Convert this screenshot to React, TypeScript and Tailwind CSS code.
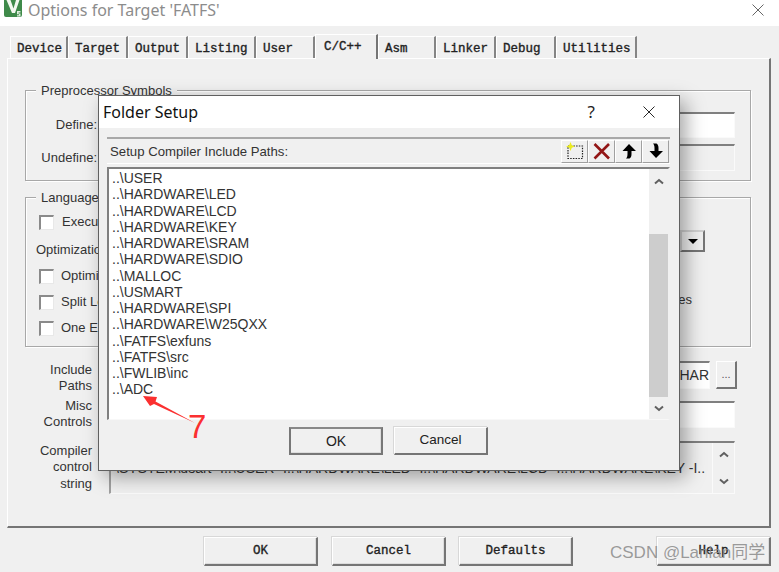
const sans = "font-['Liberation_Sans',sans-serif]";
const mono = "font-['Liberation_Mono',monospace] [-webkit-text-stroke:0.35px_#222]";

const tabs = [
  { name: "Device", w: "w-[58px]" },
  { name: "Target", w: "w-[60px]" },
  { name: "Output", w: "w-[60px]" },
  { name: "Listing", w: "w-[68px]" },
  { name: "User", w: "w-[59px]" },
  { name: "C/C++", w: "w-[63px]", active: true },
  { name: "Asm", w: "w-[58px]" },
  { name: "Linker", w: "w-[60px]" },
  { name: "Debug", w: "w-[60px]" },
  { name: "Utilities", w: "w-[81px]" },
];

const paths = [
  "..\\USER",
  "..\\HARDWARE\\LED",
  "..\\HARDWARE\\LCD",
  "..\\HARDWARE\\KEY",
  "..\\HARDWARE\\SRAM",
  "..\\HARDWARE\\SDIO",
  "..\\MALLOC",
  "..\\USMART",
  "..\\HARDWARE\\SPI",
  "..\\HARDWARE\\W25QXX",
  "..\\FATFS\\exfuns",
  "..\\FATFS\\src",
  "..\\FWLIB\\inc",
  "..\\ADC",
];

const Logo = () => (
  <svg width="19" height="18" viewBox="0 0 19 18">
    <rect x="0" y="-2" width="18" height="19" rx="2" fill="#3f8a4a" />
    <path d="M2.5 0 L8 13 L11 13 L15.5 0 L12 0 L9.5 8.5 L6.5 0 Z" fill="#f4f8f0" />
    <path d="M13 11 h3.5 v1.5 h-2 v1 h2 v3 h-3.5 v-1.2 h2 v-1 h-2 Z" fill="#dfeedd" />
  </svg>
);

const CloseIcon = ({ size, color }: { size: number; color: string }) => (
  <svg width={size} height={size} viewBox="0 0 12 12">
    <path d="M0.5 0.5 L11.5 11.5 M11.5 0.5 L0.5 11.5" stroke={color} strokeWidth="0.9" fill="none" />
  </svg>
);

const Chevron = ({ down }: { down?: boolean }) => (
  <svg width="10" height="7" viewBox="0 0 10 7">
    <path d={down ? "M1 1.5 L5 5 L9 1.5" : "M1 5.5 L5 2 L9 5.5"} stroke="#606060" strokeWidth="2" fill="none" />
  </svg>
);

const Checkbox = () => (
  <span className="w-[15px] h-[15px] shrink-0 bg-white border-t-2 border-l-2 border-[#8a8a8a] border-r border-b border-r-[#e8e8e8] border-b-[#e8e8e8]" />
);

const Group = ({ title, className, children }: { title: string; className: string; children: React.ReactNode }) => (
  <div className={`relative border border-[#a8a8a8] shadow-[1px_1px_0_#fff,inset_1px_1px_0_#fff] ${className}`}>
    <span className="absolute left-[10px] top-[-9px] bg-[#f0f0f0] px-[5px] leading-[17px] text-[#333] whitespace-nowrap">
      {title}
    </span>
    {children}
  </div>
);

const sunken = "border-t-2 border-l-2 border-t-[#808080] border-l-[#a0a0a0] border-r border-b border-r-[#fafafa] border-b-[#fafafa]";

const Raised = ({ label, className }: { label: string; className: string }) => (
  <button className={`h-[29px] bg-[#f0f0f0] border-t border-l border-t-[#fff] border-l-[#fff] border-r-2 border-b-2 border-r-[#757575] border-b-[#757575] shadow-[inset_-1px_-1px_0_#dcdcdc,-1px_-1px_0_#d8d8d8] ${mono} text-[12.5px] text-[#222] ${className}`}>
    {label}
  </button>
);

const ToolBtn = ({ children }: { children: React.ReactNode }) => (
  <div className="w-[27px] h-[23px] flex items-center justify-center border-t border-l border-white border-r border-b border-r-[#a0a0a0] border-b-[#a0a0a0]">
    {children}
  </div>
);

export default function App() {
  return (
    <div className={`relative w-[779px] h-[572px] overflow-hidden bg-[#f0f0f0] ${sans} text-[13px] text-[#333]`}>
      <div className="h-[26px] bg-white flex items-start pl-[4px]">
        <Logo />
        <span className="ml-[5px] mt-[-1px] text-[16px] leading-[22px] text-[#8c8c8c] font-['Noto_Sans',sans-serif]">
          Options for Target 'FATFS'
        </span>
        <div className="ml-auto mr-[15px] mt-[4px]">
          <CloseIcon size={12} color="#555" />
        </div>
      </div>

      <div className="flex items-end h-[32px] pl-[10px]">
        {tabs.map((t) =>
          t.active ? (
            <div
              key={t.name}
              className={`${t.w} h-[25px] mb-[-1px] z-10 pl-[8px] pt-[3px] bg-[#f0f0f0] border-t border-l border-white border-r-2 border-r-[#757575] ${mono} text-[12.5px] text-[#222]`}
            >
              {t.name}
            </div>
          ) : (
            <div
              key={t.name}
              className={`${t.w} h-[22px] pl-[6px] pt-[3px] border-t border-l border-white border-r-2 border-r-[#858585] ${mono} text-[12.5px] text-[#222]`}
            >
              {t.name}
            </div>
          )
        )}
      </div>

      <div className="mx-[7px] w-[764px] h-[470px] pt-[31px] pl-[17px] pr-[18px] border-t border-l border-white border-r-2 border-b-2 border-r-[#757575] border-b-[#757575]">
        <Group title="Preprocessor Symbols" className="h-[91px] pt-[21px] pr-[15px]">
          <div className="flex items-center h-[26px]">
            <span className="w-[71px] shrink-0 text-right">Define:</span>
            <div className={`flex-1 ml-[5px] h-full bg-white ${sunken}`} />
          </div>
          <div className="flex items-center h-[27px] mt-[6px]">
            <span className="w-[71px] shrink-0 text-right">Undefine:</span>
            <div className={`flex-1 ml-[5px] h-full ${sunken}`} />
          </div>
        </Group>

        <Group title="Language / Code Generation" className="h-[150px] mt-[16px] pt-[16px] pl-[13px] pr-[45px] mb-[14px]">
          <div className="flex items-center gap-[8px] h-[16px]">
            <Checkbox />
            <span>Execute-only Code</span>
          </div>
          <div className="flex items-start justify-between h-[28px] ml-[-3px]">
            <span className="self-end leading-[17px]">Optimization: Level 0 (-O0)</span>
            <div className="w-[25px] h-[22px] flex items-center justify-center border-2 border-t-[#d0d0d0] border-l-[#d0d0d0] border-r-[#757575] border-b-[#757575]">
              <span className="w-0 h-0 border-x-[5px] border-x-transparent border-t-[5px] border-t-black" />
            </div>
          </div>
          <div className="flex items-center gap-[7px] h-[16px] mt-[10px]">
            <Checkbox />
            <span>Optimize for Time</span>
          </div>
          <div className="flex items-center gap-[7px] h-[16px] mt-[10px]">
            <Checkbox />
            <span>Split Load and Store Multiple</span>
            <span className="ml-auto mr-[13px] mt-[-4px]">No Auto Includes</span>
          </div>
          <div className="flex items-center gap-[7px] h-[16px] mt-[10px]">
            <Checkbox />
            <span>One ELF Section per Function</span>
          </div>
        </Group>

        <div className="flex items-center h-[28px]">
          <span className="w-[67px] shrink-0 text-right leading-[16px] pt-[6px]">Include<br />Paths</span>
          <div className={`w-[601px] ml-[17px] h-full bg-white ${sunken} flex items-center justify-end overflow-hidden whitespace-nowrap text-[14px]`}>
            ..\HARDWARE\KEY;..\HARDWARE\SRAM;..\HARDWARE\SDIO;..\MALLOC;..\USMART;..\HARDWARE\SPI;..\CHAR
          </div>
          <button className="w-[21px] h-full ml-[6px] bg-[#f0f0f0] border-t border-l border-white border-r-2 border-b-2 border-r-[#757575] border-b-[#757575] text-[11px] text-[#555]">
            ...
          </button>
        </div>

        <div className="flex items-center h-[27px] mt-[12px] pr-[16px]">
          <span className="w-[67px] shrink-0 text-right leading-[16px] pb-[2px]">Misc<br />Controls</span>
          <div className={`flex-1 ml-[16px] h-full bg-white ${sunken}`} />
        </div>

        <div className="flex items-center h-[53px] mt-[13px] pr-[16px]">
          <span className="w-[67px] shrink-0 text-right leading-[16.5px]">Compiler<br />control<br />string</span>
          <div className={`flex-1 min-w-0 ml-[17px] h-full flex ${sunken}`}>
            <div className="flex-1 min-w-0 overflow-hidden whitespace-nowrap flex items-center pl-[4px] text-[14px]">
              \SYSTEM\usart -I..\USER -I..\HARDWARE\LED -I..\HARDWARE\LCD -I..\HARDWARE\KEY -I..
            </div>
            <div className="w-[22px] shrink-0 flex flex-col items-center justify-between py-[8px] border-l border-[#fafafa]">
              <Chevron />
              <Chevron down />
            </div>
          </div>
        </div>
      </div>

      <div className="flex mt-[9px] ml-[204px]">
        <Raised label="OK" className="w-[114px]" />
        <Raised label="Cancel" className="w-[114px] ml-[14px]" />
        <Raised label="Defaults" className="w-[114px] ml-[13px]" />
        <Raised label="Help" className="w-[114px] ml-[84px]" />
      </div>

      {/* dialog on top of the options window */}
      <div className="absolute left-[98px] top-[95px] w-[582px] h-[376px] bg-[#f0f0f0] border border-[#606060] shadow-[6px_6px_18px_rgba(0,0,0,0.35)] flex flex-col">
        <div className="h-[32px] bg-white shrink-0 flex items-center pl-[4px]">
          <span className="font-['Noto_Sans',sans-serif] text-[16px] text-[#111]">Folder Setup</span>
          <span className="ml-auto mr-[48px] text-[17px] text-[#222] font-['Noto_Sans',sans-serif]">?</span>
          <div className="mr-[24px]">
            <CloseIcon size={12} color="#111" />
          </div>
        </div>

        <div className="mt-[9px] ml-[8px] mr-[9px] h-[27px] flex items-center border-t-2 border-[#a8a8a8] border-b border-b-white pl-[3px] pr-[1px]">
          <span className="pt-[2px] text-[13.2px]">Setup Compiler Include Paths:</span>
          <div className="ml-auto flex">
            <ToolBtn>
              <svg width="20" height="18" viewBox="0 0 20 18">
                <rect x="3" y="4" width="14.5" height="12.5" fill="none" stroke="#222" strokeWidth="1.2" strokeDasharray="1.5 1.2" />
                <path d="M5.5 0 L6.8 3.2 L10 4.5 L6.8 5.8 L5.5 9 L4.2 5.8 L1 4.5 L4.2 3.2 Z" fill="#ecec20" />
              </svg>
            </ToolBtn>
            <ToolBtn>
              <svg width="18" height="17" viewBox="0 0 18 17">
                <path d="M1.5 1 L16 15.5 M16 1 L1.5 15.5" stroke="#931616" strokeWidth="2.6" fill="none" />
              </svg>
            </ToolBtn>
            <ToolBtn>
              <svg width="16" height="16" viewBox="0 0 16 16">
                <path d="M8 1 L15 8 L10.5 8 L10.5 11 C10.5 13 10 14.5 8.5 15.5 L5 15.5 C6 14.5 6.5 13 6.5 11 L6.5 8 L1.5 8 Z" fill="#000" />
              </svg>
            </ToolBtn>
            <ToolBtn>
              <svg width="16" height="16" viewBox="0 0 16 16">
                <path d="M8 15 L15 8 L10.5 8 L10.5 5 C10.5 3 10 1.5 8.5 0.5 L5 0.5 C6 1.5 6.5 3 6.5 5 L6.5 8 L1.5 8 Z" fill="#000" />
              </svg>
            </ToolBtn>
          </div>
        </div>

        <div className="mt-[3px] ml-[8px] mr-[9px] h-[253px] flex bg-white border-t-2 border-l-2 border-t-[#808080] border-l-[#808080] border-r-2 border-b border-r-[#f0f0f0] border-b-[#f8f8f8]">
          <div className="flex-1 pl-[3px] pt-[1px] text-[14px]">
            {paths.map((p) => (
              <div key={p} className="h-[16.25px] leading-[16px] whitespace-nowrap">
                {p}
              </div>
            ))}
          </div>
          <div className="w-[19px] bg-[#f0f0f0] flex flex-col items-center">
            <div className="h-[24px] flex items-end pb-[8px]">
              <Chevron />
            </div>
            <div className="mt-[41px] w-full h-[164px] bg-[#cdcdcd]" />
            <div className="h-[22px] flex items-center">
              <Chevron down />
            </div>
          </div>
        </div>

        <div className="flex mt-[7px] ml-[190px]">
          <button className="w-[94px] h-[28px] border-2 border-[#777] border-t-[#888] bg-[#f0f0f0] shadow-[inset_-1px_-1px_0_#ddd] text-[14px] text-[#222]">
            OK
          </button>
          <button className="w-[94px] h-[28px] ml-[11px] border-t border-l border-white border-r-2 border-b-2 border-r-[#757575] border-b-[#757575] shadow-[-1px_-1px_0_#d8d8d8] bg-[#f0f0f0] text-[13.5px] text-[#222]">
            Cancel
          </button>
        </div>
      </div>

      {/* annotation drawn over the screenshot */}
      <svg className="absolute left-[140px] top-[392px]" width="60" height="36" viewBox="140 392 60 36">
        <path d="M143 396 L157 397 L155.5 401.5 L195 423 L154 404 L150 406 Z" fill="#fb3030" />
      </svg>
      <span className="absolute left-[188px] top-[409px] text-[33px] leading-[36px] text-[#fb3030] font-['Liberation_Sans',sans-serif]">
        7
      </span>

      <span className="absolute left-[610px] top-[542px] text-[17px] leading-[22px] text-[#8a8a8a]/85 whitespace-nowrap font-['Liberation_Sans','Noto_Sans_CJK_SC',sans-serif]">
        CSDN @Lanlan同学
      </span>
    </div>
  );
}
